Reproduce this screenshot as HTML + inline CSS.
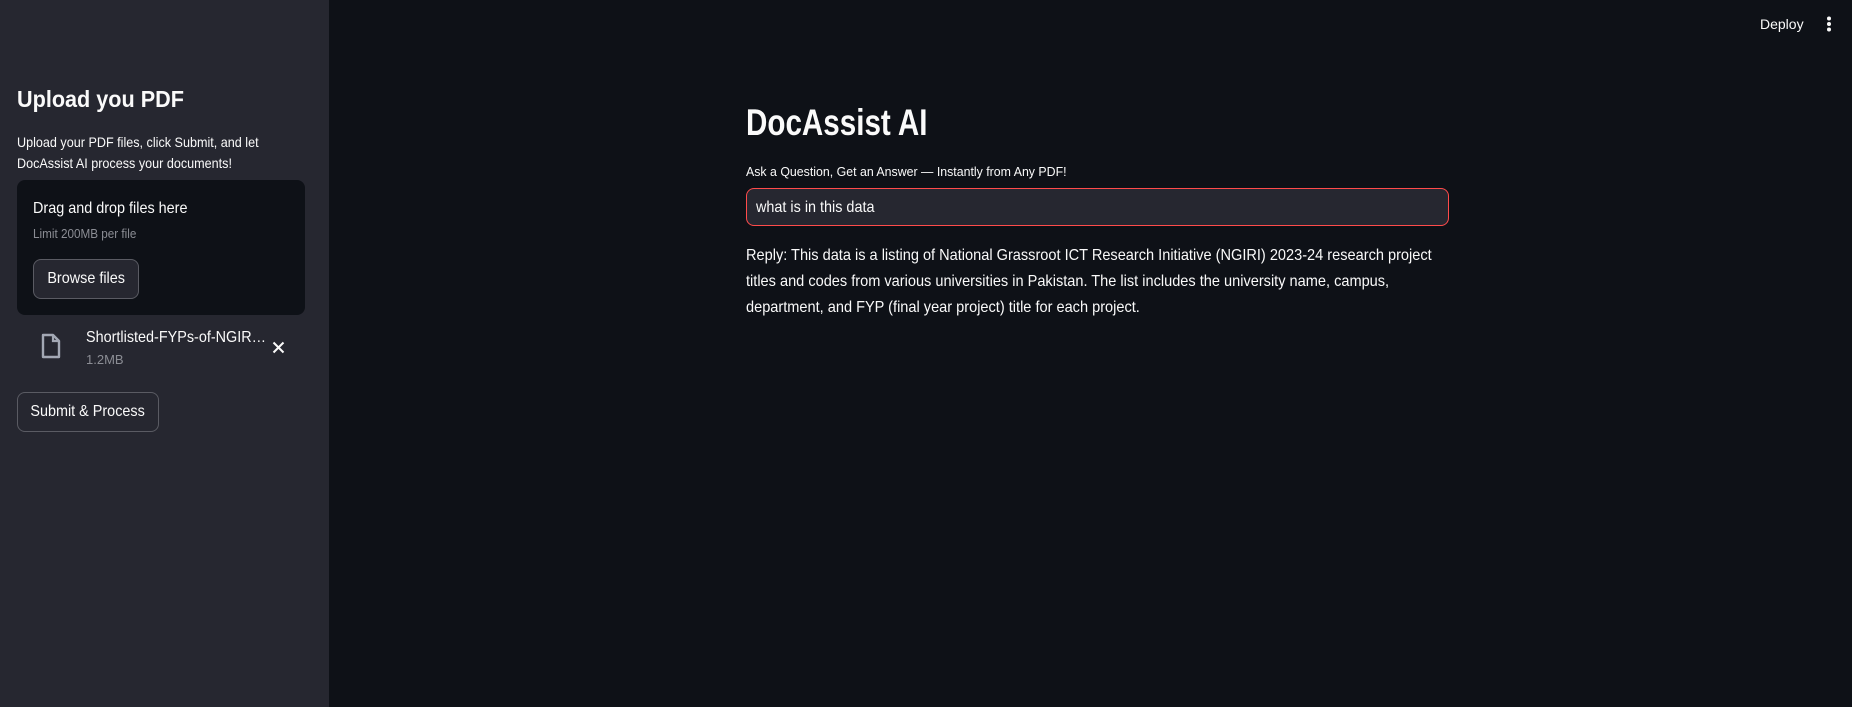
<!DOCTYPE html>
<html><head><meta charset="utf-8"><style>
*{margin:0;padding:0;box-sizing:border-box}
body{width:1852px;height:707px;background:#0e1117;font-family:"Liberation Sans",sans-serif;color:#fafafa;position:relative;overflow:hidden}
.a{position:absolute;white-space:nowrap}
.sq{transform-origin:left center;transform:scaleX(.9)}
#sb{position:absolute;left:0;top:0;width:329px;height:707px;background:#262730}
.btn{position:absolute;border:1px solid #5a5b63;border-radius:8px;background:#262730;color:#fafafa;font-size:16px;display:flex;align-items:center;justify-content:center}
.btn span{display:inline-block;transform:scaleX(.9);transform-origin:center}
</style></head><body>
<div id="sb">
<div class="a sq" style="left:17px;top:86px;font-size:23px;font-weight:bold;transform:scaleX(.94)">Upload you PDF</div>
<div class="a sq" style="left:17px;top:132px;font-size:14px;line-height:21px">Upload your PDF files, click Submit, and let<br>DocAssist AI process your documents!</div>
<div class="a" style="left:17px;top:180px;width:288px;height:135px;background:#0e1117;border-radius:8px"></div>
<div class="a sq" style="left:33px;top:200px;font-size:16px">Drag and drop files here</div>
<div class="a sq" style="left:33px;top:226px;font-size:13px;color:#8b8d94">Limit 200MB per file</div>
<div class="btn" style="left:33px;top:259px;width:106px;height:40px"><span>Browse files</span></div>
<svg class="a" style="left:40px;top:333px" width="22" height="26" viewBox="0 0 22 26"><path d="M3 2h10l6 6v16H3z" fill="none" stroke="#a3a8b4" stroke-width="2.4" stroke-linejoin="round"/><path d="M13 2v6h6" fill="none" stroke="#a3a8b4" stroke-width="2.2"/></svg>
<div class="a sq" style="left:86px;top:329px;font-size:16px">Shortlisted-FYPs-of-NGIR…</div>
<div class="a" style="left:86px;top:352px;font-size:13px;color:#8b8d94">1.2MB</div>
<svg class="a" style="left:272px;top:341px" width="13" height="13" viewBox="0 0 13 13"><path d="M1.5 1.5l10 10M11.5 1.5l-10 10" stroke="#fafafa" stroke-width="2"/></svg>
<div class="btn" style="left:17px;top:392px;width:142px;height:40px"><span>Submit &amp; Process</span></div>
</div>
<div class="a" style="left:1760px;top:16px;font-size:14px">Deploy</div>
<svg class="a" style="left:1825px;top:16px" width="8" height="16"><circle cx="4" cy="2.5" r="2" fill="#fafafa"/><circle cx="4" cy="8" r="2" fill="#fafafa"/><circle cx="4" cy="13.5" r="2" fill="#fafafa"/></svg>
<div class="a sq" style="left:746px;top:102px;font-size:37px;font-weight:bold;transform:scaleX(.8)">DocAssist AI</div>
<div class="a sq" style="left:746px;top:164px;font-size:13px;transform:scaleX(.95)">Ask a Question, Get an Answer — Instantly from Any PDF!</div>
<div class="a" style="left:746px;top:188px;width:703px;height:38px;background:#262730;border:1px solid #ff4b4b;border-radius:8px"></div>
<div class="a sq" style="left:756px;top:199px;font-size:16px">what is in this data</div>
<div class="a sq" style="left:746px;top:243px;font-size:16px;line-height:26px;transform:scaleX(.91)">Reply: This data is a listing of National Grassroot ICT Research Initiative (NGIRI) 2023-24 research project<br>titles and codes from various universities in Pakistan. The list includes the university name, campus,<br>department, and FYP (final year project) title for each project.</div>
</body></html>
